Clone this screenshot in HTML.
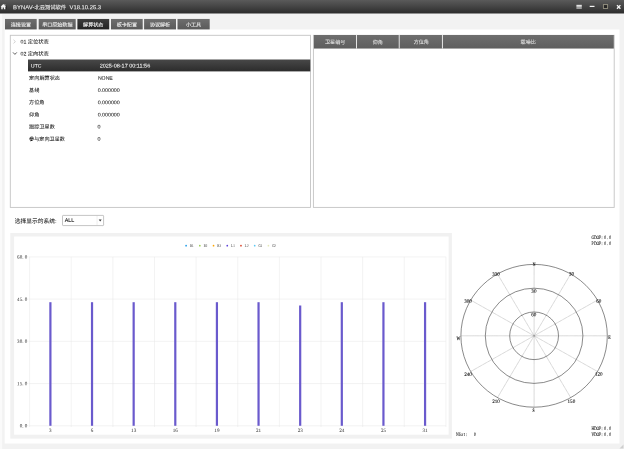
<!DOCTYPE html>
<html lang="zh-CN"><head><meta charset="utf-8"><title>BYNAV-北云测试软件 V18.10.25.3</title>
<style>
html,body{margin:0;padding:0;}
body{width:624px;height:449px;overflow:hidden;background:#f2f2f2;position:relative;font-family:"Liberation Sans","Noto Sans CJK SC",sans-serif;font-size:5.15px;color:#262626;line-height:1;}
#bg,#ct{position:absolute;left:0;top:0;}
.t{position:absolute;left:0;top:0;white-space:nowrap;transform-origin:0 0;-webkit-text-stroke:0.06px currentColor;}
#tx{position:absolute;left:0;top:0;width:624px;height:449px;filter:grayscale(1);}
.lt{-webkit-text-stroke:0.09px currentColor;}
svg text{font-family:"Liberation Serif","Noto Serif CJK SC",serif;}
</style></head><body>
<svg id="bg" width="624" height="449" viewBox="0 0 624 449">
<defs><linearGradient id="gT" x1="0" y1="0" x2="0" y2="1"><stop offset="0" stop-color="#5a5a5a"/><stop offset="0.45" stop-color="#464646"/><stop offset="1" stop-color="#2c2c2c"/></linearGradient><linearGradient id="gA" x1="0" y1="0" x2="0" y2="1"><stop offset="0" stop-color="#6e6e6e"/><stop offset="1" stop-color="#5a5a5a"/></linearGradient><linearGradient id="gS" x1="0" y1="0" x2="0" y2="1"><stop offset="0" stop-color="#3c3c3c"/><stop offset="1" stop-color="#232323"/></linearGradient><linearGradient id="gR" x1="0" y1="0" x2="0" y2="1"><stop offset="0" stop-color="#484848"/><stop offset="1" stop-color="#2c2c2c"/></linearGradient><linearGradient id="gH" x1="0" y1="0" x2="0" y2="1"><stop offset="0" stop-color="#6e6e6e"/><stop offset="1" stop-color="#5e5e5e"/></linearGradient></defs>
<rect x="0.00" y="0.00" width="624.00" height="13.50" fill="url(#gT)"/>
<path d="M0.6 6.8 L3.3 4.1 L6.0 6.8 L5.3 6.8 L5.3 9.2 L3.9 9.2 L3.9 7.5 L2.7 7.5 L2.7 9.2 L1.3 9.2 L1.3 6.8 Z" fill="#f6f6f6"/><rect x="4.5" y="4.3" width="0.8" height="1.4" fill="#f6f6f6"/><rect x="6.0" y="5.6" width="0.7" height="3.6" fill="#1c1c1c" opacity="0.7"/><rect x="576.4" y="4.8" width="5.4" height="2.0" fill="#e2e2e2"/><rect x="576.4" y="7.3" width="5.4" height="0.6" fill="#dadada"/><rect x="576.4" y="8.3" width="5.4" height="0.6" fill="#dadada"/><rect x="589.7" y="5.8" width="4.8" height="1.2" fill="#f4f4f4"/><rect x="603.3" y="4.7" width="4.4" height="3.9" fill="#262626" stroke="#b4b09a" stroke-width="0.7"/><path d="M617.0 5.1 L620.4 8.7 M620.4 5.1 L617.0 8.7" stroke="#f6f6f6" stroke-width="1.35"/>
<rect x="0.00" y="14.00" width="2.20" height="435.00" fill="#fafafa"/>
<rect x="4.70" y="29.45" width="614.75" height="414.10" fill="#ffffff"/>
<rect x="5.00" y="18.95" width="31.70" height="10.45" fill="url(#gA)"/>
<rect x="38.70" y="18.95" width="37.00" height="10.45" fill="url(#gA)"/>
<rect x="77.40" y="18.95" width="31.80" height="10.45" fill="url(#gS)"/>
<rect x="111.00" y="18.95" width="31.70" height="10.45" fill="url(#gA)"/>
<rect x="144.10" y="18.95" width="31.90" height="10.45" fill="url(#gA)"/>
<rect x="177.50" y="18.95" width="32.20" height="10.45" fill="url(#gA)"/>
<rect x="10.3" y="35.3" width="300.2" height="172.1" fill="#fff" stroke="#c4c4c4" stroke-width="0.9"/>
<path d="M13.5 39.8 L15.4 41.6 L13.5 43.4" fill="none" stroke="#b4b4b4" stroke-width="0.6"/><path d="M13.0 52.4 L14.9 54.4 L16.8 52.4" fill="none" stroke="#444" stroke-width="0.85"/>
<rect x="28.00" y="59.50" width="282.30" height="11.90" fill="url(#gR)"/>
<rect x="313.4" y="35.3" width="300.8" height="172.1" fill="#fff" stroke="#c4c4c4" stroke-width="0.9"/>
<rect x="313.90" y="35.00" width="299.90" height="13.55" fill="url(#gH)"/>
<rect x="356.05" y="35.00" width="0.90" height="13.55" fill="#f4f4f4"/>
<rect x="398.75" y="35.00" width="0.90" height="13.55" fill="#f4f4f4"/>
<rect x="441.95" y="35.00" width="0.90" height="13.55" fill="#f4f4f4"/>
<rect x="62.5" y="215.4" width="41.1" height="10.2" rx="0.7" fill="#fff" stroke="#9c9c9c" stroke-width="0.6"/><line x1="97.0" y1="215.6" x2="97.0" y2="225.4" stroke="#c4c4c4" stroke-width="0.5" stroke-dasharray="0.5 0.4"/><path d="M98.7 219.6 L101.7 219.6 L100.2 221.4 Z" fill="#3a3a3a"/>
<rect x="10.30" y="233.00" width="441.60" height="205.60" fill="#f1f1f1"/>
<rect x="14.10" y="236.50" width="434.50" height="198.20" fill="#ffffff"/>
<line x1="28.6" y1="256.90" x2="445.9" y2="256.90" stroke="#e6e6e6" stroke-width="0.5"/>
<line x1="28.6" y1="299.12" x2="445.9" y2="299.12" stroke="#e6e6e6" stroke-width="0.5"/>
<line x1="28.6" y1="341.35" x2="445.9" y2="341.35" stroke="#e6e6e6" stroke-width="0.5"/>
<line x1="28.6" y1="383.57" x2="445.9" y2="383.57" stroke="#e6e6e6" stroke-width="0.5"/>
<line x1="28.6" y1="425.80" x2="445.9" y2="425.80" stroke="#e6e6e6" stroke-width="0.5"/>
<line x1="29.60" y1="256.9" x2="29.60" y2="427.0" stroke="#e6e6e6" stroke-width="0.5"/>
<line x1="71.23" y1="256.9" x2="71.23" y2="427.0" stroke="#e6e6e6" stroke-width="0.5"/>
<line x1="112.86" y1="256.9" x2="112.86" y2="427.0" stroke="#e6e6e6" stroke-width="0.5"/>
<line x1="154.49" y1="256.9" x2="154.49" y2="427.0" stroke="#e6e6e6" stroke-width="0.5"/>
<line x1="196.12" y1="256.9" x2="196.12" y2="427.0" stroke="#e6e6e6" stroke-width="0.5"/>
<line x1="237.75" y1="256.9" x2="237.75" y2="427.0" stroke="#e6e6e6" stroke-width="0.5"/>
<line x1="279.38" y1="256.9" x2="279.38" y2="427.0" stroke="#e6e6e6" stroke-width="0.5"/>
<line x1="321.01" y1="256.9" x2="321.01" y2="427.0" stroke="#e6e6e6" stroke-width="0.5"/>
<line x1="362.64" y1="256.9" x2="362.64" y2="427.0" stroke="#e6e6e6" stroke-width="0.5"/>
<line x1="404.27" y1="256.9" x2="404.27" y2="427.0" stroke="#e6e6e6" stroke-width="0.5"/>
<line x1="445.90" y1="256.9" x2="445.90" y2="427.0" stroke="#e6e6e6" stroke-width="0.5"/>
<rect x="49.30" y="302.20" width="2.2" height="123.60" fill="#6a5acd"/>
<rect x="90.93" y="302.20" width="2.2" height="123.60" fill="#6a5acd"/>
<rect x="132.56" y="302.20" width="2.2" height="123.60" fill="#6a5acd"/>
<rect x="174.19" y="302.20" width="2.2" height="123.60" fill="#6a5acd"/>
<rect x="215.82" y="302.20" width="2.2" height="123.60" fill="#6a5acd"/>
<rect x="257.45" y="302.20" width="2.2" height="123.60" fill="#6a5acd"/>
<rect x="299.08" y="305.50" width="2.2" height="120.30" fill="#6a5acd"/>
<rect x="340.71" y="302.20" width="2.2" height="123.60" fill="#6a5acd"/>
<rect x="382.34" y="302.20" width="2.2" height="123.60" fill="#6a5acd"/>
<rect x="423.97" y="302.20" width="2.2" height="123.60" fill="#6a5acd"/>
<circle cx="186.10" cy="245.7" r="0.85" fill="#1e9be8"/>
<circle cx="199.82" cy="245.7" r="0.85" fill="#9acd50"/>
<circle cx="213.54" cy="245.7" r="0.85" fill="#ffa500"/>
<circle cx="227.26" cy="245.7" r="0.85" fill="#5b3fd9"/>
<circle cx="240.98" cy="245.7" r="0.85" fill="#d9452b"/>
<circle cx="254.70" cy="245.7" r="0.85" fill="#5bc8f5"/>
<circle cx="268.42" cy="245.7" r="0.85" fill="#e4e8b8"/>
<line x1="534.1" y1="335.8" x2="534.10" y2="264.40" stroke="#7c7c7c" stroke-width="0.42" stroke-dasharray="0.65 0.3"/>
<line x1="534.1" y1="335.8" x2="570.70" y2="273.97" stroke="#7c7c7c" stroke-width="0.42" stroke-dasharray="0.65 0.3"/>
<line x1="534.1" y1="335.8" x2="597.49" y2="300.10" stroke="#7c7c7c" stroke-width="0.42" stroke-dasharray="0.65 0.3"/>
<line x1="534.1" y1="335.8" x2="607.30" y2="335.80" stroke="#7c7c7c" stroke-width="0.42" stroke-dasharray="0.65 0.3"/>
<line x1="534.1" y1="335.8" x2="597.49" y2="371.50" stroke="#7c7c7c" stroke-width="0.42" stroke-dasharray="0.65 0.3"/>
<line x1="534.1" y1="335.8" x2="570.70" y2="397.63" stroke="#7c7c7c" stroke-width="0.42" stroke-dasharray="0.65 0.3"/>
<line x1="534.1" y1="335.8" x2="534.10" y2="407.20" stroke="#7c7c7c" stroke-width="0.42" stroke-dasharray="0.65 0.3"/>
<line x1="534.1" y1="335.8" x2="497.50" y2="397.63" stroke="#7c7c7c" stroke-width="0.42" stroke-dasharray="0.65 0.3"/>
<line x1="534.1" y1="335.8" x2="470.71" y2="371.50" stroke="#7c7c7c" stroke-width="0.42" stroke-dasharray="0.65 0.3"/>
<line x1="534.1" y1="335.8" x2="460.90" y2="335.80" stroke="#7c7c7c" stroke-width="0.42" stroke-dasharray="0.65 0.3"/>
<line x1="534.1" y1="335.8" x2="470.71" y2="300.10" stroke="#7c7c7c" stroke-width="0.42" stroke-dasharray="0.65 0.3"/>
<line x1="534.1" y1="335.8" x2="497.50" y2="273.97" stroke="#7c7c7c" stroke-width="0.42" stroke-dasharray="0.65 0.3"/>
<ellipse cx="534.1" cy="335.8" rx="73.20" ry="71.40" fill="none" stroke="#3a3a3a" stroke-width="0.6"/>
<ellipse cx="534.1" cy="335.8" rx="48.80" ry="47.60" fill="none" stroke="#3a3a3a" stroke-width="0.6"/>
<ellipse cx="534.1" cy="335.8" rx="24.40" ry="23.80" fill="none" stroke="#3a3a3a" stroke-width="0.6"/>
<path d="M623.5 444.5 L619.5 448.5 L623.5 448.5 Z" fill="#cfcfcf"/>
</svg>
<div id="tx">
<svg id="ct" width="624" height="449" viewBox="0 0 624 449">
<text transform="translate(17.10 258.65) rotate(.03) scale(1.0 1)" x="0.00 2.55 5.10 7.65" font-size="5.1" fill="#3a3a3a" stroke="#3a3a3a" stroke-width="0.03" xml:space="preserve">60.0</text>
<text transform="translate(17.10 300.88) rotate(.03) scale(1.0 1)" x="0.00 2.55 5.10 7.65" font-size="5.1" fill="#3a3a3a" stroke="#3a3a3a" stroke-width="0.03" xml:space="preserve">45.0</text>
<text transform="translate(17.10 343.10) rotate(.03) scale(1.0 1)" x="0.00 2.55 5.10 7.65" font-size="5.1" fill="#3a3a3a" stroke="#3a3a3a" stroke-width="0.03" xml:space="preserve">30.0</text>
<text transform="translate(17.10 385.32) rotate(.03) scale(1.0 1)" x="0.00 2.55 5.10 7.65" font-size="5.1" fill="#3a3a3a" stroke="#3a3a3a" stroke-width="0.03" xml:space="preserve">15.0</text>
<text transform="translate(19.65 427.55) rotate(.03) scale(1.0 1)" x="0.00 2.55 5.10" font-size="5.1" fill="#3a3a3a" stroke="#3a3a3a" stroke-width="0.03" xml:space="preserve">0.0</text>
<text transform="translate(49.12 432.10) rotate(.03) scale(1.0 1)" x="0.00" font-size="5.1" fill="#3a3a3a" stroke="#3a3a3a" stroke-width="0.03" xml:space="preserve">3</text>
<text transform="translate(90.75 432.10) rotate(.03) scale(1.0 1)" x="0.00" font-size="5.1" fill="#3a3a3a" stroke="#3a3a3a" stroke-width="0.03" xml:space="preserve">6</text>
<text transform="translate(131.11 432.10) rotate(.03) scale(1.0 1)" x="0.00 2.55" font-size="5.1" fill="#3a3a3a" stroke="#3a3a3a" stroke-width="0.03" xml:space="preserve">13</text>
<text transform="translate(172.74 432.10) rotate(.03) scale(1.0 1)" x="0.00 2.55" font-size="5.1" fill="#3a3a3a" stroke="#3a3a3a" stroke-width="0.03" xml:space="preserve">16</text>
<text transform="translate(214.37 432.10) rotate(.03) scale(1.0 1)" x="0.00 2.55" font-size="5.1" fill="#3a3a3a" stroke="#3a3a3a" stroke-width="0.03" xml:space="preserve">19</text>
<text transform="translate(256.00 432.10) rotate(.03) scale(1.0 1)" x="0.00 2.55" font-size="5.1" fill="#3a3a3a" stroke="#3a3a3a" stroke-width="0.03" xml:space="preserve">21</text>
<text transform="translate(297.63 432.10) rotate(.03) scale(1.0 1)" x="0.00 2.55" font-size="5.1" fill="#3a3a3a" stroke="#3a3a3a" stroke-width="0.03" xml:space="preserve">23</text>
<text transform="translate(339.26 432.10) rotate(.03) scale(1.0 1)" x="0.00 2.55" font-size="5.1" fill="#3a3a3a" stroke="#3a3a3a" stroke-width="0.03" xml:space="preserve">24</text>
<text transform="translate(380.89 432.10) rotate(.03) scale(1.0 1)" x="0.00 2.55" font-size="5.1" fill="#3a3a3a" stroke="#3a3a3a" stroke-width="0.03" xml:space="preserve">25</text>
<text transform="translate(422.52 432.10) rotate(.03) scale(1.0 1)" x="0.00 2.55" font-size="5.1" fill="#3a3a3a" stroke="#3a3a3a" stroke-width="0.03" xml:space="preserve">31</text>
<text transform="translate(189.80 247.10) rotate(.03) scale(0.74 1)" x="0.15 2.99" font-size="4.2" fill="#484848" stroke="#484848" stroke-width="0.04" xml:space="preserve">B1</text>
<text transform="translate(203.52 247.10) rotate(.03) scale(0.74 1)" x="0.15 2.99" font-size="4.2" fill="#484848" stroke="#484848" stroke-width="0.04" xml:space="preserve">B2</text>
<text transform="translate(217.24 247.10) rotate(.03) scale(0.74 1)" x="0.15 2.99" font-size="4.2" fill="#484848" stroke="#484848" stroke-width="0.04" xml:space="preserve">B3</text>
<text transform="translate(230.96 247.10) rotate(.03) scale(0.74 1)" x="0.15 2.99" font-size="4.2" fill="#484848" stroke="#484848" stroke-width="0.04" xml:space="preserve">L1</text>
<text transform="translate(244.68 247.10) rotate(.03) scale(0.74 1)" x="0.15 2.99" font-size="4.2" fill="#484848" stroke="#484848" stroke-width="0.04" xml:space="preserve">L2</text>
<text transform="translate(258.40 247.10) rotate(.03) scale(0.74 1)" x="0.15 2.99" font-size="4.2" fill="#484848" stroke="#484848" stroke-width="0.04" xml:space="preserve">G1</text>
<text transform="translate(272.12 247.10) rotate(.03) scale(0.74 1)" x="0.15 2.99" font-size="4.2" fill="#484848" stroke="#484848" stroke-width="0.04" xml:space="preserve">G2</text>
<text transform="translate(532.73 266.35) rotate(.03) scale(0.74 1)" x="0.15" font-size="5.1" fill="#151515" stroke="#151515" stroke-width="0.1" xml:space="preserve" font-weight="bold">N</text>
<text transform="translate(569.05 275.55) rotate(.03) scale(1.0 1)" x="0.00 2.55" font-size="5.1" fill="#151515" stroke="#151515" stroke-width="0.1" xml:space="preserve">30</text>
<text transform="translate(596.15 302.75) rotate(.03) scale(1.0 1)" x="0.00 2.55" font-size="5.1" fill="#151515" stroke="#151515" stroke-width="0.1" xml:space="preserve">60</text>
<text transform="translate(608.02 339.45) rotate(.03) scale(0.74 1)" x="0.15" font-size="5.1" fill="#151515" stroke="#151515" stroke-width="0.1" xml:space="preserve" font-weight="bold">E</text>
<text transform="translate(594.88 375.65) rotate(.03) scale(1.0 1)" x="0.00 2.55 5.10" font-size="5.1" fill="#151515" stroke="#151515" stroke-width="0.1" xml:space="preserve">120</text>
<text transform="translate(567.57 403.05) rotate(.03) scale(1.0 1)" x="0.00 2.55 5.10" font-size="5.1" fill="#151515" stroke="#151515" stroke-width="0.1" xml:space="preserve">150</text>
<text transform="translate(532.33 412.45) rotate(.03) scale(0.74 1)" x="0.15" font-size="5.1" fill="#151515" stroke="#151515" stroke-width="0.1" xml:space="preserve" font-weight="bold">S</text>
<text transform="translate(492.18 403.05) rotate(.03) scale(1.0 1)" x="0.00 2.55 5.10" font-size="5.1" fill="#151515" stroke="#151515" stroke-width="0.1" xml:space="preserve">210</text>
<text transform="translate(464.28 375.95) rotate(.03) scale(1.0 1)" x="0.00 2.55 5.10" font-size="5.1" fill="#151515" stroke="#151515" stroke-width="0.1" xml:space="preserve">240</text>
<text transform="translate(456.43 339.55) rotate(.03) scale(0.74 1)" x="0.15" font-size="5.1" fill="#151515" stroke="#151515" stroke-width="0.1" xml:space="preserve" font-weight="bold">W</text>
<text transform="translate(464.28 302.75) rotate(.03) scale(1.0 1)" x="0.00 2.55 5.10" font-size="5.1" fill="#151515" stroke="#151515" stroke-width="0.1" xml:space="preserve">300</text>
<text transform="translate(492.18 275.85) rotate(.03) scale(1.0 1)" x="0.00 2.55 5.10" font-size="5.1" fill="#151515" stroke="#151515" stroke-width="0.1" xml:space="preserve">330</text>
<text transform="translate(531.35 292.75) rotate(.03) scale(1.0 1)" x="0.00 2.55" font-size="5.1" fill="#151515" stroke="#151515" stroke-width="0.1" xml:space="preserve">30</text>
<text transform="translate(531.25 316.15) rotate(.03) scale(1.0 1)" x="0.00 2.55" font-size="5.1" fill="#151515" stroke="#151515" stroke-width="0.1" xml:space="preserve">60</text>
<text transform="translate(591.30 238.95) rotate(.03) scale(0.74 1)" x="0.15 3.60 7.04 10.49 13.93 17.38 20.83 24.27" font-size="5.1" fill="#151515" stroke="#151515" stroke-width="0.1" xml:space="preserve">GDOP:0.0</text>
<text transform="translate(591.30 245.05) rotate(.03) scale(0.74 1)" x="0.15 3.60 7.04 10.49 13.93 17.38 20.83 24.27" font-size="5.1" fill="#151515" stroke="#151515" stroke-width="0.1" xml:space="preserve">PDOP:0.0</text>
<text transform="translate(591.30 429.85) rotate(.03) scale(0.74 1)" x="0.15 3.60 7.04 10.49 13.93 17.38 20.83 24.27" font-size="5.1" fill="#151515" stroke="#151515" stroke-width="0.1" xml:space="preserve">HDOP:0.0</text>
<text transform="translate(591.30 436.35) rotate(.03) scale(0.74 1)" x="0.15 3.60 7.04 10.49 13.93 17.38 20.83 24.27" font-size="5.1" fill="#151515" stroke="#151515" stroke-width="0.1" xml:space="preserve">VDOP:0.0</text>
<text transform="translate(456.00 436.25) rotate(.03) scale(0.74 1)" x="0.15 3.60 7.04 10.49 13.93 17.38 20.83 24.27" font-size="5.1" fill="#151515" stroke="#151515" stroke-width="0.1" xml:space="preserve">NSat:  0</text>
</svg>
<div class="t lt" id="ti" style="transform:translate(13.10px,5.19px) rotate(.03deg);font-size:5.900px;color:#f0f0f0"><span style="font-size:5.93px">BYNAV-</span><span style="font-size:5.3px">北云测试软件</span><span style="font-size:5.86px;margin-left:3.3px">V18.10.25.3</span></div>
<div class="t lt" id="tab0" style="transform:translate(10.79px,22.49px) rotate(.03deg);font-size:5.079px;color:#f0f0f0">连接设置</div>
<div class="t lt" id="tab1" style="transform:translate(42.16px,22.46px) rotate(.03deg);font-size:5.054px;color:#f0f0f0">串口原始数据</div>
<div class="t lt" id="tab2" style="transform:translate(83.10px,22.39px) rotate(.03deg);font-size:5.079px;color:#ffffff">解算状态</div>
<div class="t lt" id="tab3" style="transform:translate(116.69px,22.50px) rotate(.03deg);font-size:5.079px;color:#f0f0f0">板卡配置</div>
<div class="t lt" id="tab4" style="transform:translate(149.90px,22.44px) rotate(.03deg);font-size:5.079px;color:#f0f0f0">协议解析</div>
<div class="t lt" id="tab5" style="transform:translate(186.00px,22.44px) rotate(.03deg);font-size:5.071px;color:#f0f0f0">小工具</div>
<div class="t" id="t01" style="transform:translate(20.54px,39.57px) rotate(.03deg);font-size:5.261px;color:#1c1c1c">01 定位状态</div>
<div class="t" id="t02" style="transform:translate(20.55px,51.41px) rotate(.03deg);font-size:5.261px;color:#1c1c1c">02 定向状态</div>
<div class="t lt" id="k0" style="transform:translate(31.09px,64.58px) rotate(.03deg);font-size:4.965px;color:#f0f0f0">UTC</div>
<div class="t lt" id="v0" style="transform:translate(99.66px,63.60px) rotate(.03deg);font-size:5.493px;color:#f0f0f0">2025-08-17 00:11:56</div>
<div class="t" id="k1" style="transform:translate(29.11px,75.73px) rotate(.03deg);font-size:5.154px;color:#1c1c1c">定向解算状态</div>
<div class="t" id="v1" style="transform:translate(97.90px,75.76px) rotate(.03deg);font-size:5.166px;color:#1c1c1c">NONE</div>
<div class="t" id="k2" style="transform:translate(29.09px,87.98px) rotate(.03deg);font-size:5.148px;color:#1c1c1c">基线</div>
<div class="t" id="v2" style="transform:translate(97.72px,88.07px) rotate(.03deg);font-size:5.295px;color:#1c1c1c">0.000000</div>
<div class="t" id="k3" style="transform:translate(29.10px,100.03px) rotate(.03deg);font-size:5.145px;color:#1c1c1c">方位角</div>
<div class="t" id="v3" style="transform:translate(97.72px,100.21px) rotate(.03deg);font-size:5.295px;color:#1c1c1c">0.000000</div>
<div class="t" id="k4" style="transform:translate(29.09px,112.54px) rotate(.03deg);font-size:5.148px;color:#1c1c1c">仰角</div>
<div class="t" id="v4" style="transform:translate(97.71px,112.44px) rotate(.03deg);font-size:5.295px;color:#1c1c1c">0.000000</div>
<div class="t" id="k5" style="transform:translate(29.10px,124.49px) rotate(.03deg);font-size:5.151px;color:#1c1c1c">跟踪卫星数</div>
<div class="t" id="v5" style="transform:translate(97.61px,124.57px) rotate(.03deg);font-size:5.350px;color:#1c1c1c">0</div>
<div class="t" id="k6" style="transform:translate(29.11px,136.65px) rotate(.03deg);font-size:5.148px;color:#1c1c1c">参与定向卫星数</div>
<div class="t" id="v6" style="transform:translate(97.61px,136.74px) rotate(.03deg);font-size:5.350px;color:#1c1c1c">0</div>
<div class="t lt" id="h0" style="transform:translate(325.00px,39.87px) rotate(.03deg);font-size:5.081px;color:#dedede">卫星编号</div>
<div class="t lt" id="h1" style="transform:translate(372.81px,40.05px) rotate(.03deg);font-size:5.071px;color:#dedede">仰角</div>
<div class="t lt" id="h2" style="transform:translate(413.63px,39.72px) rotate(.03deg);font-size:5.056px;color:#dedede">方位角</div>
<div class="t lt" id="h3" style="transform:translate(520.60px,39.74px) rotate(.03deg);font-size:5.072px;color:#dedede">载噪比</div>
<div class="t" id="cl" style="transform:translate(14.77px,218.93px) rotate(.03deg);font-size:5.760px;color:#1c1c1c">选择显示的系统:</div>
<div class="t" id="all" style="-webkit-text-stroke:0.1px currentColor;transform:translate(64.70px,218.02px) rotate(.03deg);font-size:5.410px;color:#1c1c1c">ALL</div>
</div>
</body></html>
